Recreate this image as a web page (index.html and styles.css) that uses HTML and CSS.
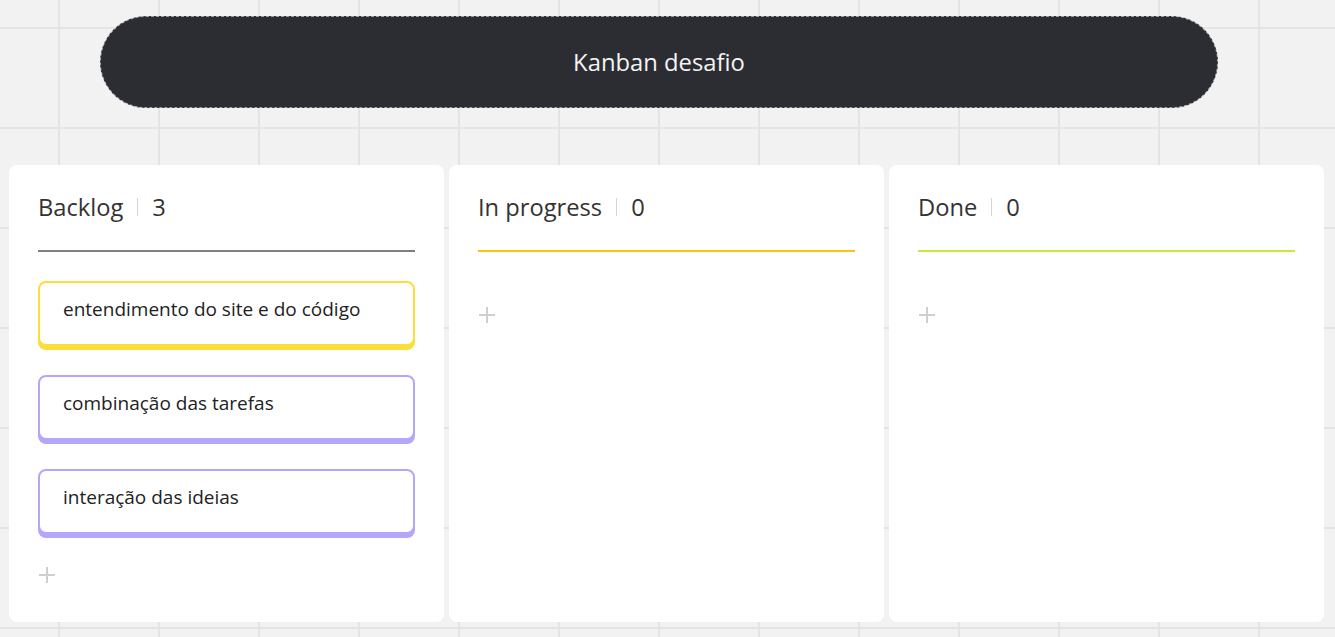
FILE: index.html
```html
<!DOCTYPE html>
<html lang="pt">
<head>
<meta charset="utf-8">
<title>Kanban desafio</title>
<link rel="stylesheet" href="styles.css">
</head>
<body>
<div class="page">
  <header class="title-bar"><h1 class="title">Kanban desafio</h1></header>
  <main class="board">
    <section class="column">
      <div class="col-head col-head--gray">
        <span class="col-name">Backlog</span><span class="sep"></span><span class="col-count">3</span>
      </div>
      <div class="cards">
        <div class="card card--yellow">entendimento do site e do código</div>
        <div class="card card--purple">combinação das tarefas</div>
        <div class="card card--purple">interação das ideias</div>
      </div>
      <div class="add"><svg width="18" height="18" viewBox="0 0 18 18"><path d="M9 1v16M1 9h16" stroke="#cfcfcf" stroke-width="2" fill="none"/></svg></div>
    </section>
    <section class="column">
      <div class="col-head col-head--yellow">
        <span class="col-name">In progress</span><span class="sep"></span><span class="col-count">0</span>
      </div>
      <div class="add add--empty"><svg width="18" height="18" viewBox="0 0 18 18"><path d="M9 1v16M1 9h16" stroke="#cfcfcf" stroke-width="2" fill="none"/></svg></div>
    </section>
    <section class="column">
      <div class="col-head col-head--lime">
        <span class="col-name">Done</span><span class="sep"></span><span class="col-count">0</span>
      </div>
      <div class="add add--empty"><svg width="18" height="18" viewBox="0 0 18 18"><path d="M9 1v16M1 9h16" stroke="#cfcfcf" stroke-width="2" fill="none"/></svg></div>
    </section>
  </main>
</div>
</body>
</html>
```
FILE: styles.css
```css
* { box-sizing: border-box; }
html, body { margin: 0; padding: 0; }
body {
  width: 1335px;
  height: 637px;
  overflow: hidden;
  font-family: "Open Sans", "Noto Sans", sans-serif;
  background-color: #f2f2f2;
  background-image:
    linear-gradient(to right, #e4e4e4 0, #e4e4e4 2px, transparent 2px),
    linear-gradient(to bottom, #e4e4e4 0, #e4e4e4 2px, transparent 2px);
  background-size: 100px 100px;
  background-position: 58px 27px;
}
.page {
  padding-top: 16px;
}
.title-bar {
  margin-left: 100px;
  width: 1118px;
  height: 92px;
  background: #2c2d33;
  border: 1px dashed #a0a0a4;
  border-radius: 46px;
  display: flex;
  align-items: center;
  justify-content: center;
}
.title {
  margin: 0;
  font-weight: 400;
  font-size: 23.8px;
  color: #f4f4f4;
}
.board {
  display: flex;
  gap: 5px;
  padding-left: 9px;
  margin-top: 57px;
}
.column {
  width: 435px;
  height: 457px;
  background: #fff;
  border-radius: 8px;
  padding: 25px 29px 0 29px;
}
.col-head {
  display: flex;
  align-items: center;
  height: 33px;
  border-bottom: 2px solid #808080;
  box-sizing: content-box;
  padding-bottom: 27px;
  color: #333;
  font-size: 23.7px;
}
.col-head--gray { border-bottom-color: #7f7f7f; }
.col-head--yellow { border-bottom-color: #f8c40e; }
.col-head--lime { border-bottom-color: #c6ec3a; }
.sep {
  display: inline-block;
  width: 1px;
  height: 18px;
  background: #d4d4d4;
  margin: 0 14px 0 14px;
}
.cards {
  display: flex;
  flex-direction: column;
  gap: 29px;
  margin-top: 29px;
}
.card {
  height: 65px;
  border: 2px solid;
  border-radius: 8px;
  padding: 14px 23px 0 23px;
  font-size: 19px;
  line-height: 24px;
  color: #222;
  background: #fff;
}
.card--yellow {
  border-color: #fddd3c;
  box-shadow: 0 4px 0 0 #fddd3c;
}
.card--purple {
  border-color: #b2a7fb;
  box-shadow: 0 4px 0 0 #b2a7fb;
}
.add {
  margin-top: 32px;
  height: 18px;
  display: flex;
  align-items: center;
}
.add svg { display: block; }
.add--empty { margin-top: 54px; }
```
